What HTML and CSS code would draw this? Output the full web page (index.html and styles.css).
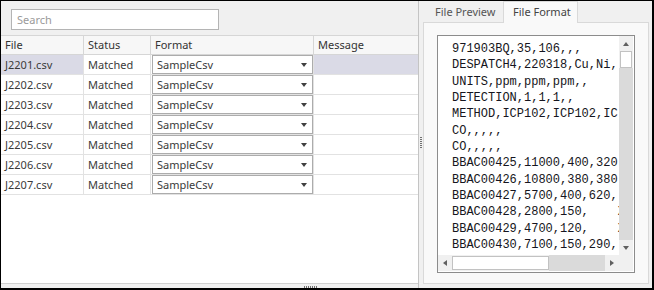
FILE: index.html
```html
<!DOCTYPE html>
<html lang="en">
  <head>
    <meta charset="UTF-8" />
    <title>File Import</title>
    <link rel="stylesheet" href="styles.css">
  </head>
  <body>
    <div class="window">
      <section class="files-pane">
        <div class="search-bar">
          <input class="search" type="text" placeholder="Search">
        </div>
        <div class="grid">
          <div class="grid-row head">
            <div class="cell">File</div>
            <div class="cell">Status</div>
            <div class="cell">Format</div>
            <div class="cell">Message</div>
          </div>
          <div class="grid-row selected">
            <div class="cell hl">J2201.csv</div>
            <div class="cell">Matched</div>
            <div class="cell fmt"><div class="combo">SampleCsv<span class="caret"></span></div></div>
            <div class="cell hl"></div>
          </div>
          <div class="grid-row">
            <div class="cell">J2202.csv</div>
            <div class="cell">Matched</div>
            <div class="cell fmt"><div class="combo">SampleCsv<span class="caret"></span></div></div>
            <div class="cell"></div>
          </div>
          <div class="grid-row">
            <div class="cell">J2203.csv</div>
            <div class="cell">Matched</div>
            <div class="cell fmt"><div class="combo">SampleCsv<span class="caret"></span></div></div>
            <div class="cell"></div>
          </div>
          <div class="grid-row">
            <div class="cell">J2204.csv</div>
            <div class="cell">Matched</div>
            <div class="cell fmt"><div class="combo">SampleCsv<span class="caret"></span></div></div>
            <div class="cell"></div>
          </div>
          <div class="grid-row">
            <div class="cell">J2205.csv</div>
            <div class="cell">Matched</div>
            <div class="cell fmt"><div class="combo">SampleCsv<span class="caret"></span></div></div>
            <div class="cell"></div>
          </div>
          <div class="grid-row">
            <div class="cell">J2206.csv</div>
            <div class="cell">Matched</div>
            <div class="cell fmt"><div class="combo">SampleCsv<span class="caret"></span></div></div>
            <div class="cell"></div>
          </div>
          <div class="grid-row">
            <div class="cell">J2207.csv</div>
            <div class="cell">Matched</div>
            <div class="cell fmt"><div class="combo">SampleCsv<span class="caret"></span></div></div>
            <div class="cell"></div>
          </div>
          <div class="grid-fill"></div>
        </div>
        <div class="h-split"><span class="grip-h"></span></div>
      </section>

      <div class="v-split"><span class="grip-v"></span></div>

      <section class="preview-pane">
        <div class="tabs">
          <div class="tab">File Preview</div>
          <div class="tab active">File Format</div>
        </div>
        <div class="tab-body">
          <div class="textbox">
            <pre class="text">971903BQ,35,106,,,
DESPATCH4,220318,Cu,Ni,
UNITS,ppm,ppm,ppm,,
DETECTION,1,1,1,,
METHOD,ICP102,ICP102,IC
CO,,,,,
CO,,,,,
BBAC00425,11000,400,320
BBAC00426,10800,380,380
BBAC00427,5700,400,620,
BBAC00428,2800,150,    X
BBAC00429,4700,120,    X
BBAC00430,7100,150,290,</pre>
            <div class="vscroll">
              <div class="sb-btn"><span class="arr up"></span></div>
              <div class="sb-thumb-v"></div>
              <div class="sb-track"></div>
              <div class="sb-btn"><span class="arr down"></span></div>
            </div>
            <div class="hscroll">
              <div class="sb-btn"><span class="arr left"></span></div>
              <div class="sb-thumb-h"></div>
              <div class="sb-track"></div>
              <div class="sb-btn"><span class="arr right"></span></div>
            </div>
            <div class="corner"></div>
          </div>
        </div>
      </section>
    </div>
  </body>
</html>
```

FILE: styles.css
```css
* {
  margin: 0;
  padding: 0;
  box-sizing: border-box;
}
body {
  font-family: 'Noto Sans', sans-serif;
  font-size: 11px;
  color: #3a3a3a;
  background: #fff;
}
.window {
  width: 654px;
  height: 290px;
  border: 1px solid #000;
  border-right-width: 2px;
  border-bottom-width: 2px;
  background: #f0f0f0;
  display: flex;
}

/* left pane */
.files-pane {
  width: 418px;
  display: flex;
  flex-direction: column;
  border-right: 1px solid #c4c4c4;
}
.search-bar {
  height: 34px;
  padding: 8px 0 0 10px;
  background: #f0f0f0;
}
.search {
  width: 208px;
  height: 21px;
  border: 1px solid #b4b4b4;
  background: #fff;
  padding: 0 5px;
  font-family: 'Noto Sans', sans-serif;
  font-size: 11px;
  color: #333;
  outline: none;
}
.search::placeholder {
  color: #9a9a9a;
}
.grid {
  flex: 1;
  display: flex;
  flex-direction: column;
  background: #fff;
  border-top: 1px solid #d6d6d6;
}
.grid-row {
  display: grid;
  grid-template-columns: 83px 67px 163px 1fr;
  height: 20px;
  border-bottom: 1px solid #e2e2e2;
}
.grid-row.head {
  height: 19px;
  background: #f7f7f7;
  border-bottom-color: #d6d6d6;
}
.cell {
  border-right: 1px solid #e2e2e2;
  padding-left: 4px;
  line-height: 19px;
  white-space: nowrap;
  overflow: hidden;
}
.head .cell {
  line-height: 18px;
  color: #333;
  border-right-color: #d6d6d6;
}
.cell:last-child {
  border-right: none;
}
.cell.hl {
  background: #dadae6;
}
.cell.fmt {
  padding: 0 0 0 1px;
}
.combo {
  position: relative;
  width: 161px;
  height: 19px;
  border: 1px solid #acacac;
  background: #fff;
  padding-left: 4px;
  line-height: 17px;
}
.caret {
  position: absolute;
  right: 5px;
  top: 7px;
  border-left: 3px solid transparent;
  border-right: 3px solid transparent;
  border-top: 4px solid #404040;
}
.grid-fill {
  flex: 1;
}
.h-split {
  height: 5px;
  background: #f0f0f0;
  border-top: 1px solid #d0d0d0;
  position: relative;
}
.grip-h {
  position: absolute;
  left: 303px;
  top: 2px;
  width: 13px;
  height: 2px;
  background: repeating-linear-gradient(90deg, #707070 0 1px, transparent 1px 2px);
}

/* splitter */
.v-split {
  width: 4px;
  position: relative;
}
.grip-v {
  position: absolute;
  left: 1px;
  top: 136px;
  width: 2px;
  height: 12px;
  background: repeating-linear-gradient(180deg, #707070 0 1px, transparent 1px 2px);
}

/* right pane */
.preview-pane {
  flex: 1;
  display: flex;
  flex-direction: column;
  padding: 0 3px 4px 0;
}
.tabs {
  display: flex;
  height: 21px;
  padding-left: 1px;
  align-items: flex-end;
}
.tab {
  width: 79px;
  height: 19px;
  padding-left: 11px;
  line-height: 18px;
  color: #555;
  white-space: nowrap;
}
.tab.active {
  width: 75px;
  height: 22px;
  line-height: 20px;
  padding-left: 9px;
  background: #f9f9f9;
  border: 1px solid #d9d9d9;
  border-bottom: none;
  margin-bottom: -1px;
  position: relative;
  color: #444;
}
.tab-body {
  flex: 1;
  background: #f9f9f9;
  border: 1px solid #d9d9d9;
  padding: 12px 13px 10px 13px;
}
.textbox {
  height: 238px;
  border: 1px solid #8c8c8c;
  background: #fff;
  display: grid;
  grid-template-columns: 181px 14px;
  grid-template-rows: 219px 16px;
}
.text {
  font-family: 'Liberation Mono', monospace;
  font-size: 12px;
  line-height: 16.33px;
  color: #151520;
  padding: 5px 0 0 14px;
  overflow: hidden;
  white-space: pre;
}
.vscroll {
  display: flex;
  flex-direction: column;
  background: #f0f0f0;
}
.hscroll {
  display: flex;
  background: #f0f0f0;
}
.corner {
  background: #f0f0f0;
}
.sb-btn {
  width: 14px;
  height: 15px;
  flex: none;
  display: flex;
  align-items: center;
  justify-content: center;
  background: #f0f0f0;
}
.sb-track {
  flex: 1;
  background: #dadada;
}
.sb-thumb-v {
  height: 17px;
  margin: 0 1px;
  background: #fff;
  border: 1px solid #c2c2c2;
}
.sb-thumb-h {
  width: 97px;
  margin: 1px 0;
  background: #fff;
  border: 1px solid #c2c2c2;
}
.arr {
  width: 0;
  height: 0;
}
.arr.up {
  border-left: 3px solid transparent;
  border-right: 3px solid transparent;
  border-bottom: 4px solid #606060;
}
.arr.down {
  border-left: 3px solid transparent;
  border-right: 3px solid transparent;
  border-top: 4px solid #606060;
}
.arr.left {
  border-top: 3px solid transparent;
  border-bottom: 3px solid transparent;
  border-right: 4px solid #606060;
}
.arr.right {
  border-top: 3px solid transparent;
  border-bottom: 3px solid transparent;
  border-left: 4px solid #606060;
}
```
